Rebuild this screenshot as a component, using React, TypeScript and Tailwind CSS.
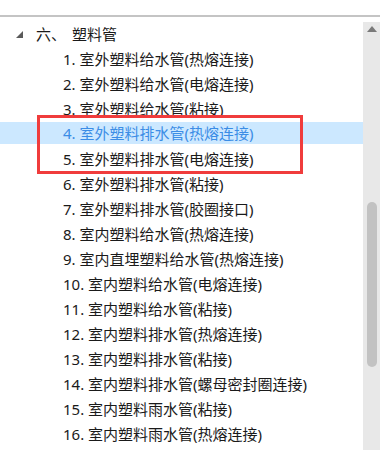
import React from "react";

const items = [
  "1. 室外塑料给水管(热熔连接)",
  "2. 室外塑料给水管(电熔连接)",
  "3. 室外塑料给水管(粘接)",
  "4. 室外塑料排水管(热熔连接)",
  "5. 室外塑料排水管(电熔连接)",
  "6. 室外塑料排水管(粘接)",
  "7. 室外塑料排水管(胶圈接口)",
  "8. 室内塑料给水管(热熔连接)",
  "9. 室内直埋塑料给水管(热熔连接)",
  "10. 室内塑料给水管(电熔连接)",
  "11. 室内塑料给水管(粘接)",
  "12. 室内塑料排水管(热熔连接)",
  "13. 室内塑料排水管(粘接)",
  "14. 室内塑料排水管(螺母密封圈连接)",
  "15. 室内塑料雨水管(粘接)",
  "16. 室内塑料雨水管(热熔连接)",
];

export default function App() {
  return (
    <div
      className="relative w-[380px] h-[450px] overflow-hidden bg-white text-[15px] text-[#1a1a1a]"
      style={{ fontFamily: '"Noto Sans", "Noto Sans CJK SC", sans-serif' }}
    >
      <div className="h-[15px]" />
      <div className="h-[2px] bg-[#c4c4c4]" />
      <div className="h-[5px]" />
      <div className="flex h-[428px]">
        <div className="flex-1 flex flex-col">
          <div className="h-[25px]">
            <div className="h-[24px] flex items-center">
              <svg width="7" height="7" viewBox="0 0 7 7" className="ml-[16px]">
                <polygon points="7,0 7,7 0,7" fill="#5a5a5a" />
              </svg>
              <span className="ml-[13px] leading-none">六、</span>
              <span className="ml-[6px] leading-none">塑料管</span>
            </div>
          </div>
          {items.map((t, i) => (
            <div key={i} className="h-[25px]">
              <div
                className={
                  i === 3
                    ? "h-[22px] flex items-center pt-[1px] bg-[#cce8ff] text-[#3b8de6]"
                    : "h-[24px] flex items-center"
                }
              >
                <span className="ml-[63px] leading-none whitespace-nowrap">{t}</span>
              </div>
            </div>
          ))}
        </div>
        <div className="w-[17px] bg-[#e8e8e8] flex flex-col items-center">
          <svg width="10" height="6" viewBox="0 0 10 6" className="mt-[4px]">
            <polygon points="5,0 10,6 0,6" fill="#7a7a7a" />
          </svg>
          <div className="mt-[170px] w-[10px] h-[165px] rounded-full bg-[#c2c2c2]" />
        </div>
      </div>
      <div className="absolute left-[37px] top-[115px] w-[266px] h-[59px] border-[3px] border-[#f03c3c]" />
    </div>
  );
}
